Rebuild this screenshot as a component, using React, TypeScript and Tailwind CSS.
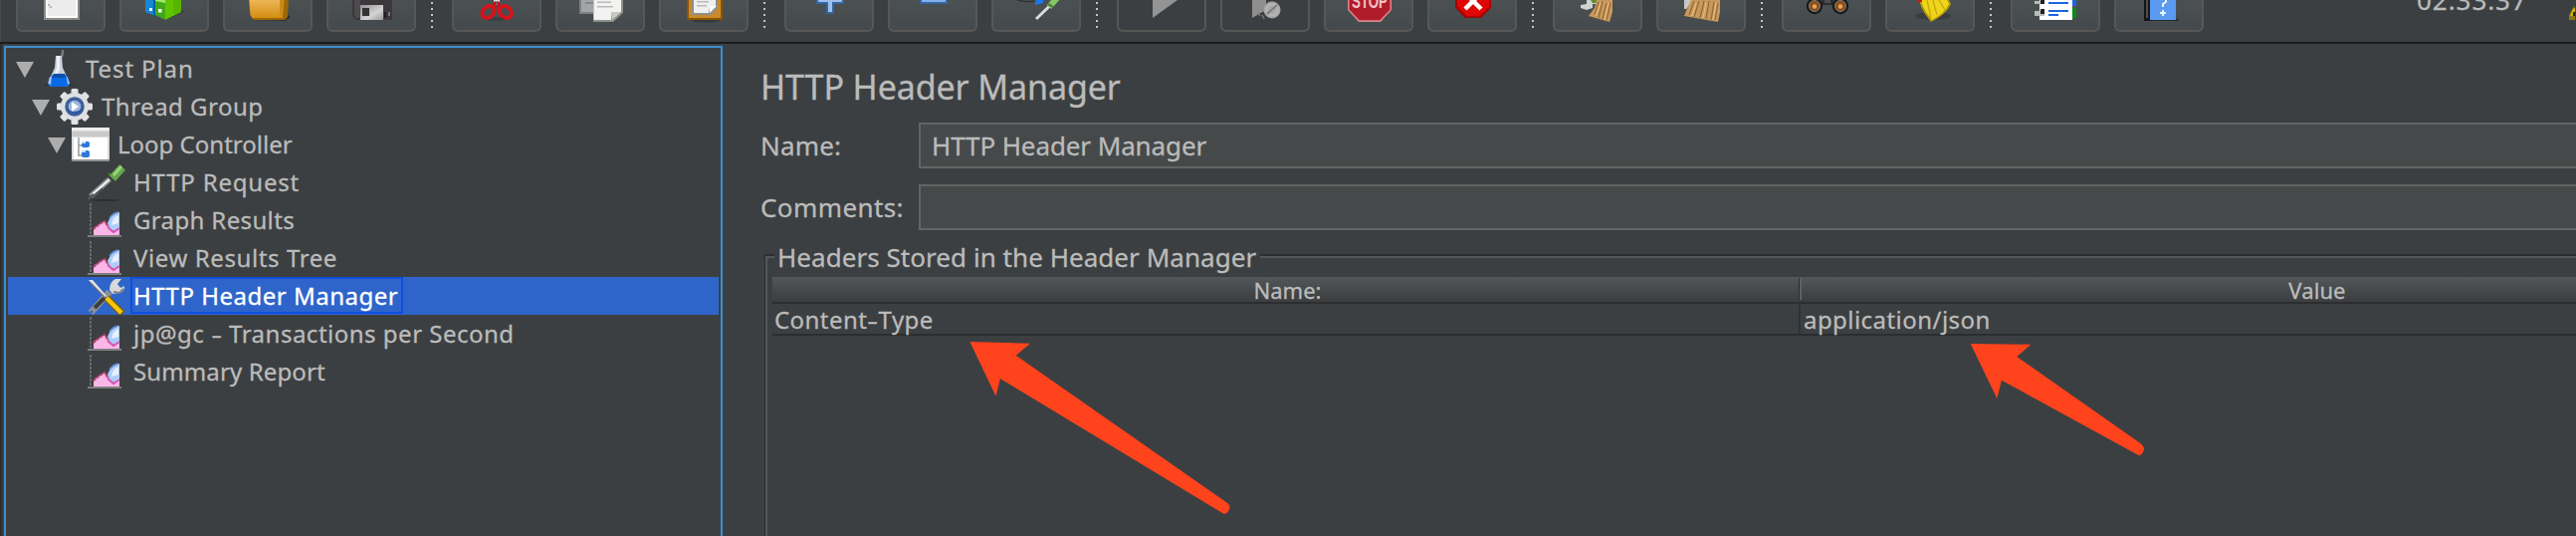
import React from "react";

/* ---------- toolbar icons, each drawn in a 90x32 button ---------- */

const NewFile = () => (
  <g>
    <rect x="28" y="-16" width="36" height="36" fill="#8b8e88" />
    <rect x="30" y="-14" width="32" height="32" fill="#fbfbfb" />
    <rect x="32" y="-12" width="28" height="28" fill="#ececec" />
    <path d="M32 4h2v2h2v2h-2v-2h-2z" fill="#b4b4b4" />
  </g>
);

const Templates = () => (
  <g>
    <path d="M44 20L62 12L68 10L60 14L46 20z" fill="#2c2f30" />
    <path d="M26 -4H36V16L26 12z" fill="#1488d4" />
    <path d="M34 -4H36V17L34 16z" fill="#0b5f9c" />
    <path d="M36 -4H46V20L36 15z" fill="#3fa81b" />
    <path d="M46 -4H62V12L46 20z" fill="#61c400" />
    <path d="M36 0L46 -3V3L36 1z" fill="#a5e86a" />
    <path d="M54 -4H62V12L54 16z" fill="#57b500" />
    <rect x="30" y="8" width="3" height="3" fill="#e8f6ff" />
    <rect x="39" y="9" width="3.5" height="3.5" fill="#f2ffe8" />
  </g>
);

const Folder = () => (
  <g>
    <path d="M30 20L62 21L68 17L64 14z" fill="#2c2f30" />
    <path d="M26 -4H62V19H31Q27 18 27 10z" fill="url(#gold)" />
    <path d="M57 -4H62V19L57 15z" fill="#c98a18" />
    <path d="M62 -4H66L65 17L62 20H31V18H60z" fill="#9b6709" />
  </g>
);

const Save = () => (
  <g>
    <path d="M26 -4H66V20H30L26 16z" fill="#3b373a" />
    <path d="M28 -4H34V18H30L28 15z" fill="#4d494c" />
    <rect x="34" y="5" width="23" height="15" fill="url(#silver)" />
    <rect x="36" y="8" width="7" height="8" fill="#333" />
    <rect x="62" y="12" width="2" height="4" fill="#777" />
    <rect x="58" y="12" width="2" height="6" fill="#1f1d1f" />
  </g>
);

const Cut = () => (
  <g>
    <ellipse cx="45" cy="19" rx="12" ry="2" fill="#3a3e3f" />
    <path d="M42 -4H48V3L45 5L42 3z" fill="#d5dadd" />
    <path d="M42 2L44.500 1V7L42 10z" fill="#c50f16" />
    <path d="M48 2L45.500 1V7L48 10z" fill="#c50f16" />
    <ellipse cx="36.500" cy="12" rx="6.800" ry="5.200" fill="none" stroke="#d4141b" strokeWidth="4" transform="rotate(-42 36.500 12)" />
    <ellipse cx="53.800" cy="12" rx="6.800" ry="5.200" fill="none" stroke="#d4141b" strokeWidth="4" transform="rotate(42 53.800 12)" />
    <rect x="44" y="2" width="2" height="2" fill="#555" />
  </g>
);

const Copy = () => (
  <g>
    <path d="M24 -6H40V14H24z" fill="#808285" />
    <path d="M26 -6H40V12H26z" fill="#a3a5a8" />
    <rect x="30" y="2" width="8" height="2" fill="#85878a" />
    <path d="M38 -6H68V13L58 22H38z" fill="#8f928d" />
    <path d="M38.500 -6H66V12H56V20H38.500z" fill="#f2f2f0" />
    <path d="M56 12H66L57 20z" fill="#c9cac6" />
    <path d="M42 1.500H56V3H42zM42 6H58V7.500H42z" fill="#b9bab7" />
  </g>
);

const Paste = () => (
  <g>
    <ellipse cx="47" cy="20.500" rx="14" ry="2" fill="#35393a" />
    <rect x="28" y="-8" width="36" height="28" rx="1" fill="#8c5403" />
    <rect x="30" y="-8" width="32" height="26" fill="#c9892d" />
    <path d="M33 -8H59V8L52 15H33z" fill="#8f9089" />
    <path d="M35 -8H57V6H50V13H35z" fill="#efefed" />
    <path d="M50 6H58L51 13z" fill="#fff" />
    <path d="M38 1H50V2.500H38zM38 5H48V6.500H38z" fill="#b9bab7" />
  </g>
);

const Plus = () => (
  <g>
    <path d="M32 -6H60V4H50V14H42V4H32z" fill="#3465a4" />
    <path d="M34 -6H58V2H48V12H44V2H34z" fill="#9cc0ea" />
  </g>
);

const Minus = () => (
  <g>
    <rect x="32" y="-6" width="28" height="10" fill="#3465a4" />
    <rect x="34" y="-6" width="24" height="8" fill="#83b0e6" />
  </g>
);

const Toggle = () => (
  <g>
    <path d="M26 0Q34 2.500 43 1" stroke="#303435" strokeWidth="1.500" fill="none" />
    <path d="M46 -2H52V3L44 5V3z" fill="#1b78f2" />
    <path d="M45 19L58 6.500" stroke="#d9dcda" strokeWidth="3" fill="none" />
    <path d="M58 7L66 -2" stroke="#86c765" strokeWidth="6" fill="none" />
    <path d="M57 4L62 7" stroke="#4f7f38" strokeWidth="2.500" fill="none" />
  </g>
);

const Play = () => <path d="M36 -18L61 0L36 18z" fill="#939393" />;

const PlayNoPause = () => (
  <g>
    <path d="M32 -14H46V10L32 18z" fill="#8f8f8f" />
    <path d="M42 15l2 4M38 13l2 3" stroke="#777" strokeWidth="1.500" />
    <circle cx="52" cy="10" r="8.500" fill="#a8a8a8" />
    <circle cx="52" cy="10" r="5.500" fill="none" stroke="#b9b9b9" strokeWidth="1.500" />
    <path d="M47 14L57 5" stroke="#7f7f7f" strokeWidth="2.200" />
  </g>
);

const Stop = () => (
  <g>
    <path d="M24 -8H68V10L57 22H35L24 10z" fill="#d9868d" />
    <path d="M25.500 -8H66.500V9.500L56.300 20.300H35.700L25.500 9.500z" fill="#b11c2b" />
    <text x="46" y="7.800" textAnchor="middle" textLength="36" lengthAdjust="spacingAndGlyphs" className="font-['Liberation_Sans'] font-bold text-[20px]" fill="#f0c2c6">STOP</text>
  </g>
);

const Shutdown = () => (
  <g>
    <path d="M28 -8H64V8L54 18H38L28 8z" fill="#a50404" />
    <path d="M30 -8H62V6.500L52.500 16H39.500L30 6.500z" fill="#e10606" />
    <path d="M38 9L54 -7M54 9L38 -7" stroke="#fff" strokeWidth="4.500" />
  </g>
);

const Broom = () => (
  <g>
    <path d="M34 -2H44V4L40 4V8L34 10L28 8V5L34 4z" fill="#cfd2d0" />
    <path d="M38 0H44V3H40z" fill="#5c8f2e" />
    <path d="M44 0H60V12L57 22L36 16L42 8z" fill="#c9995b" />
    <path d="M46 2L42 15M50 1L46 18M54 3L50 19M58 3L54 20" stroke="#94673a" strokeWidth="1.200" fill="none" />
    <path d="M48 3L43 16M56 3L52 20" stroke="#e6bd80" strokeWidth="1.200" fill="none" />
  </g>
);

const BroomAll = () => (
  <g>
    <path d="M28 0H38L30 9H28z" fill="#c6c8c8" />
    <path d="M36 -2H64V12L62 22L28 16L32 6z" fill="#c9995b" />
    <path d="M38 1L33 15M43 1L38 17M48 1L44 18M53 1L50 19M58 2L55 20M62 3L59 20" stroke="#94673a" strokeWidth="1.200" fill="none" />
    <path d="M40 3L36 16M50 3L47 18M60 3L57 20" stroke="#e6bd80" strokeWidth="1.200" fill="none" />
  </g>
);

const Binoculars = () => (
  <g>
    <rect x="40" y="-3" width="12" height="8" fill="#2a2c2e" />
    <rect x="43" y="0" width="6" height="3" fill="#4b4e50" />
    <circle cx="33" cy="6" r="8.200" fill="#17191a" />
    <circle cx="59" cy="6" r="8.200" fill="#17191a" />
    <circle cx="33" cy="6" r="5.600" fill="#8d4f1c" stroke="#777" strokeWidth="1" />
    <circle cx="59" cy="6" r="5.600" fill="#8d4f1c" stroke="#777" strokeWidth="1" />
    <circle cx="33" cy="6.500" r="2.200" fill="#e8a55e" />
    <circle cx="59" cy="6.500" r="2.200" fill="#e8a55e" />
  </g>
);

const Duster = () => (
  <g>
    <ellipse cx="48" cy="16" rx="18" ry="4" fill="#3a3e3f" />
    <path d="M34 -4H62L66 4Q62 14 46 22L40 14Q36 8 34 0z" fill="#b79b06" />
    <path d="M36 -4H60L64 4Q60 13 47 20L41 12Q37 6 36 0z" fill="#eed51c" />
    <path d="M42 0L46 18M48 0L52 15M54 0L60 10" stroke="#c4a80c" strokeWidth="1.300" fill="none" />
    <path d="M31 -3H37V2L33 2z" fill="#cf1219" />
  </g>
);

const Notebook = () => (
  <g>
    <rect x="60" y="-2" width="6" height="8" fill="#1767e0" />
    <rect x="60" y="8" width="6" height="10" fill="#0d8a12" />
    <rect x="29" y="-4" width="33" height="24" fill="#fff" />
    <path d="M24 1H34V4H24zM24 11H34V16H24z" fill="#b9bbbb" />
    <path d="M30 -2H34V4H30zM30 9H34V14H30z" fill="#222" />
    <path d="M38 2H58V4H38zM38 10H58V12H38zM38 14H48V16H38zM38 -4H58V-2H38z" fill="#1c66e4" />
  </g>
);

const Help = () => (
  <g>
    <path d="M30 21H66L62 18z" fill="#2c2f30" />
    <rect x="30" y="-4" width="8" height="25" fill="#151515" />
    <rect x="32" y="-4" width="2" height="22" fill="#4e4e4e" />
    <rect x="36" y="-4" width="26" height="24" fill="#5a9af0" />
    <path d="M52 0V2L49 4V7" stroke="#e9f2ff" strokeWidth="2" fill="none" />
    <path d="M48 10H50V12H52V14H50V16H48V14H46V12H48z" fill="#e9f2ff" />
  </g>
);

type Tool = { icon: () => React.ReactElement; disabled?: boolean };

const groups: Tool[][] = [
  [{ icon: NewFile }, { icon: Templates }, { icon: Folder }, { icon: Save }],
  [{ icon: Cut }, { icon: Copy }, { icon: Paste }],
  [{ icon: Plus }, { icon: Minus }, { icon: Toggle }],
  [{ icon: Play, disabled: true }, { icon: PlayNoPause, disabled: true }, { icon: Stop }, { icon: Shutdown }],
  [{ icon: Broom }, { icon: BroomAll }],
  [{ icon: Binoculars }, { icon: Duster }],
  [{ icon: Notebook }, { icon: Help }],
];

function ToolButton({ tool }: { tool: Tool }) {
  const Icon = tool.icon;
  return (
    <button
      className={
        "h-8 w-[90px] shrink-0 overflow-hidden rounded-b-[6px] border-2 border-t-0 border-[#575756] " +
        (tool.disabled ? "" : "bg-linear-to-b from-[#4b5153] to-[#444a4b]")
      }
    >
      <svg viewBox="2 0 86 30" width="86" height="30" className="block">
        <Icon />
      </svg>
    </button>
  );
}

function Separator() {
  return (
    <div className="ml-[15px] mr-[19px] flex w-0.5 shrink-0 flex-col gap-1 pt-0.5">
      <i className="size-0.5 bg-[#c4c4c4]" />
      <i className="size-0.5 bg-[#c4c4c4]" />
      <i className="size-0.5 bg-[#c4c4c4]" />
      <i className="size-0.5 bg-[#c4c4c4]" />
      <i className="size-0.5 bg-[#c4c4c4]" />
    </div>
  );
}

function Toolbar() {
  return (
    <div className="flex h-[42px] shrink-0 items-start overflow-hidden border-l border-[#4b4e50] pl-[15px]">
      {groups.map((g, i) => (
        <React.Fragment key={i}>
          {i > 0 && <Separator />}
          <div className="flex gap-3.5">
            {g.map((t, j) => (
              <ToolButton key={j} tool={t} />
            ))}
          </div>
        </React.Fragment>
      ))}
      <span className="-mt-4 ml-[214px] w-[153px] shrink-0 text-[26px] leading-8 tracking-[0.95px]">02:33:37</span>
      <svg width="6" height="22" viewBox="0 0 6 22" className="shrink-0">
        <path d="M6 6V20H0V15L4 8z" fill="#8a7a14" />
        <path d="M6 8V14L4 16H1L4 9z" fill="#d0b40e" />
        <path d="M4 12H6V16H4z" fill="#2a2408" />
      </svg>
    </div>
  );
}

/* ---------- tree ---------- */

const Flask = () => (
  <g>
    <ellipse cx="19" cy="35" rx="15" ry="1.500" fill="#2f3234" />
    <path d="M21 6L22 0H24V4L23 8z" fill="#777a7c" />
    <path d="M16 6H22L23 18L29.500 32Q29.500 37 25 37H13Q8 37 8.500 32L15 18z" fill="#c9cfdc" />
    <path d="M17 6H20L20 20L14 30H12L17 18z" fill="#eef0f3" />
    <path d="M12.500 25H26.500L30 33Q30 37 25 37H13Q8 37 8.500 33z" fill="#0a6ae6" />
    <path d="M14 24H25L26 28H12.500z" fill="#0d50a6" />
    <path d="M9.500 28L12 26L11 35L8.500 34zM28 28L26.500 26L28 35L30 34z" fill="#9cc4f8" />
  </g>
);

const Gear = () => (
  <g>
    {[0, 45, 90, 135].map((a) => (
      <rect key={a} x="15.500" y="1" width="7" height="36" rx="1.500" fill="#e2e3e5" transform={`rotate(${a} 19 19)`} />
    ))}
    <circle cx="19" cy="19" r="14" fill="#dddfe1" />
    <circle cx="19" cy="19" r="8" fill="#9db6de" stroke="#3d5f9c" strokeWidth="3.500" />
    <path d="M11 21A8.500 8.500 0 0 0 27 21Q19 27 11 21z" fill="#2f58a6" />
    <path d="M16 14L23 19L16 24z" fill="#fff" />
  </g>
);

const Window = () => (
  <g>
    <rect x="0" y="0" width="38" height="34" fill="#dcdcdc" />
    <rect x="0" y="0" width="38" height="3" fill="#ededed" />
    <rect x="0" y="4" width="38" height="5" fill="#c9c9c9" />
    <rect x="2" y="10" width="34" height="22" fill="#fff" />
    <rect x="0" y="32" width="38" height="2" fill="#919191" />
    <path d="M7 10V29M7 18H11M7 28H11" stroke="#9a9a9a" strokeWidth="1.500" fill="none" />
    <rect x="10" y="14" width="8" height="6" rx="2" fill="#2d78d8" />
    <rect x="10" y="23" width="8" height="7" rx="2" fill="#2d78d8" />
    <path d="M10 14H14V16H10zM10 23H14V25H10z" fill="#bfe0ff" />
  </g>
);

const Dropper = () => (
  <g>
    <ellipse cx="18" cy="37" rx="14" ry="1" fill="#2b2e30" />
    <path d="M3 33L22 16" stroke="#8d8f8e" strokeWidth="5.500" fill="none" />
    <path d="M5 31L22 16" stroke="#f4f4f4" strokeWidth="2" fill="none" />
    <path d="M4 34L15 25" stroke="#4d4f50" strokeWidth="1.500" fill="none" />
    <path d="M0 36L6 31" stroke="#55595a" strokeWidth="2" fill="none" />
    <path d="M22 9L30 17L27 17L20 11z" fill="#3f7a2c" />
    <path d="M25 15L35 4" stroke="#63a94a" strokeWidth="8" fill="none" />
    <path d="M26 12L34 3" stroke="#9ad583" strokeWidth="3" fill="none" />
  </g>
);

const Chart = () => (
  <g>
    <path d="M3 0V34" stroke="#66696b" strokeWidth="2" strokeDasharray="3 1" fill="none" />
    <path d="M0 33H34" stroke="#7d7f81" strokeWidth="2" fill="none" />
    <path d="M6 32V25L12 21L17 18L22 24L26 28L32 24V32z" fill="#fbb6e8" />
    <path d="M6 26L12 21L17 18L21 24" stroke="#b7416f" strokeWidth="2" fill="none" strokeDasharray="3 1" />
    <path d="M32 9V26L27 28L23 26L20 20Q23 11 32 9z" fill="#aecdfa" />
    <path d="M31 12V20L24 22Q25 14 31 12z" fill="#e6f0ff" />
    <path d="M22 15Q25 10 31 9" stroke="#5b8fd4" strokeWidth="1.500" fill="none" />
    <path d="M20 24L26 29L32 25" stroke="#d356b0" strokeWidth="2" fill="none" />
  </g>
);

const Tools = () => (
  <g>
    <path d="M3 35L22 14" stroke="#8f9294" strokeWidth="6.500" fill="none" />
    <path d="M7 30L18 19" stroke="#3c3f41" strokeWidth="4" fill="none" />
    <path d="M28 1H34L30 6L33 10L37 8Q37 14 32 15L25 16L22 12Q22 4 28 1z" fill="#d7d9da" />
    <path d="M26 14L32 15L36 11" stroke="#7f8284" strokeWidth="2" fill="none" />
    <circle cx="4" cy="34" r="1.500" fill="#3c66c8" />
    <path d="M1 2L5 2L19 18L17 20z" fill="#e3e4e5" />
    <path d="M3 5L18 20" stroke="#6f7173" strokeWidth="1.300" fill="none" />
    <path d="M19 20L35 36" stroke="#7a6206" strokeWidth="7" fill="none" />
    <path d="M19 20L34 35" stroke="#fbc50c" strokeWidth="4.500" fill="none" />
  </g>
);

type Node = {
  label: React.ReactNode;
  icon: () => React.ReactElement;
  pad: string;
  track: string;
  dy: number;
  open?: boolean;
  selected?: boolean;
};

const WideHyphen = () => <span className="mx-[1.500px] inline-block scale-x-140">-</span>;

const nodes: Node[] = [
  { label: "Test Plan", icon: Flask, pad: "pl-2", track: "tracking-[0.9px]", dy: 0, open: true },
  { label: "Thread Group", icon: Gear, pad: "pl-6", track: "tracking-[0.5px]", dy: 0, open: true },
  { label: "Loop Controller", icon: Window, pad: "pl-10", track: "tracking-[0px]", dy: 2, open: true },
  { label: "HTTP Request", icon: Dropper, pad: "pl-14", track: "tracking-[0.8px]", dy: 0 },
  { label: "Graph Results", icon: Chart, pad: "pl-14", track: "tracking-[0.36px]", dy: 2 },
  { label: "View Results Tree", icon: Chart, pad: "pl-14", track: "tracking-[0.6px]", dy: 2 },
  { label: "HTTP Header Manager", icon: Tools, pad: "pl-14", track: "tracking-[0.5px]", dy: 1, selected: true },
  { label: <>jp@gc <WideHyphen /> Transactions per Second</>, icon: Chart, pad: "pl-14", track: "tracking-[0.5px]", dy: 2 },
  { label: "Summary Report", icon: Chart, pad: "pl-14", track: "tracking-[0.12px]", dy: 2 },
];

function TreeRow({ node }: { node: Node }) {
  const Icon = node.icon;
  return (
    <div className={"flex h-[38px] shrink-0 " + node.pad + (node.selected ? " bg-[#2f65ca] text-white" : "")}>
      <svg width="18" height="38" viewBox="0 0 18 38" className="mr-1.5 shrink-0">
        {node.open && <path d="M0 12H18L9 28z" fill="#adadad" />}
      </svg>
      <svg width="38" height="38" viewBox={`0 ${-node.dy} 38 38`} className="shrink-0">
        <Icon />
      </svg>
      <div
        className={
          "ml-[5px] h-[37px] whitespace-pre border-2 pl-px pr-[3px] text-2xl/[34px] " +
          node.track +
          (node.selected ? " border-[#0d4fe0]" : " border-transparent")
        }
      >
        {node.label}
      </div>
    </div>
  );
}

/* ---------- editor ---------- */

function Field({ label, track, value }: { label: string; track: string; value?: string }) {
  return (
    <div className="flex h-[46px]">
      <div className={"w-[160px] shrink-0 pl-px leading-[46px] " + track}>{label}</div>
      <div className="grow border-2 border-r-0 border-[#646464] bg-[#45494a] pl-[11px] leading-[42px] tracking-[-0.1px]">{value}</div>
    </div>
  );
}

export default function App() {
  return (
    <div className="relative flex h-[538px] w-[2588px] flex-col overflow-hidden bg-[#3c3f41] font-['Noto_Sans',sans-serif] text-[26px] text-[#bbbbbb] [-webkit-text-stroke:0.3px_currentColor]">
      <Toolbar />
      <div className="h-0.5 shrink-0 bg-[#191b1c]" />
      <div className="flex min-h-0 grow">
        <div className="flex w-[728px] shrink-0 border-l-2 border-[#2c2e30] pl-0.5 pr-0.5 pt-0.5">
          <div className="flex grow flex-col border-2 border-b-0 border-[#3e8ecf] px-0.5 pt-0.5">
            {nodes.map((n, i) => (
              <TreeRow key={i} node={n} />
            ))}
          </div>
        </div>

        <div className="flex grow flex-col pl-[35px] pt-[21px]">
          <h1 className="h-[58px] pl-px text-[34px]/[44px] tracking-[-0.1px]">HTTP Header Manager</h1>
          <Field label="Name:" track="tracking-[0.2px]" value="HTTP Header Manager" />
          <div className="h-4" />
          <Field label="Comments:" track="tracking-[0.4px]" />

          <div className="ml-[5px] mt-3 flex h-[30px] items-start">
            <div className="mt-3 h-[18px] w-2.5 border-l border-t-2 border-[#2b2d2e]">
              <div className="h-4 w-full border-l-2 border-t-2 border-[#53585a]" />
            </div>
            <div className="pl-[3px] text-[26px]/[30px] tracking-[0.05px]">Headers Stored in the Header Manager</div>
            <div className="ml-1 mt-3 h-1 grow border-b-2 border-t-2 border-b-[#53585a] border-t-[#2b2d2e]" />
          </div>

          <div className="ml-[5px] flex grow border-l border-[#2b2d2e]">
            <div className="flex grow flex-col border-l-2 border-[#53585a] pl-[5px] pt-[5px]">
              <div className="flex h-[27px] border-b-2 border-[#2b2d2e] bg-linear-to-b from-[#525759] to-[#3b3d3e] text-[22px]/[27px]">
                <div className="w-[1031px] pl-1 text-center">Name:</div>
                <div className="mt-px h-[22px] w-[3px] border-l border-r-2 border-l-[#2b2d2e] border-r-[#5c6163]" />
                <div className="w-[1036px] text-center tracking-[0.1px]">Value</div>
              </div>
              <div className="flex h-8 border-b-2 border-[#2b2d2e] text-2xl/[32px]">
                <div className="w-[1031px] whitespace-pre pl-0.5 tracking-[0.45px]">
                  Content<WideHyphen />Type
                </div>
                <div className="w-0.5 bg-[#2f3133]" />
                <div className="pl-[3px] tracking-[0.45px]">application/json</div>
              </div>
            </div>
          </div>
        </div>
      </div>

      <svg className="absolute left-0 top-0" width="2588" height="538" viewBox="0 0 2588 538">
        <path d="M974.400 343L1034.900 344.700L1020.700 356.700L1231.800 504Q1235.800 506.500 1235.400 510Q1234 515 1229.800 516L1004.900 380L1000.500 397.700z" fill="#ff431c" />
        <path d="M1979.700 345L2040.300 345.700L2026.200 358L2149 444Q2154.500 448 2154 451Q2153 456 2149 457.300L2010.900 381.700L2006.300 400z" fill="#ff431c" />
      </svg>

      <svg className="absolute size-0">
        <defs>
          <linearGradient id="gold" x1="0" y1="0" x2="0" y2="1">
            <stop offset="0" stopColor="#f2bf66" />
            <stop offset="1" stopColor="#d18b0c" />
          </linearGradient>
          <linearGradient id="silver" x1="0" y1="0" x2="1" y2="1">
            <stop offset="0" stopColor="#8f8f8f" />
            <stop offset="0.600" stopColor="#d4d4d4" />
            <stop offset="1" stopColor="#9a9a9a" />
          </linearGradient>
        </defs>
      </svg>
    </div>
  );
}
